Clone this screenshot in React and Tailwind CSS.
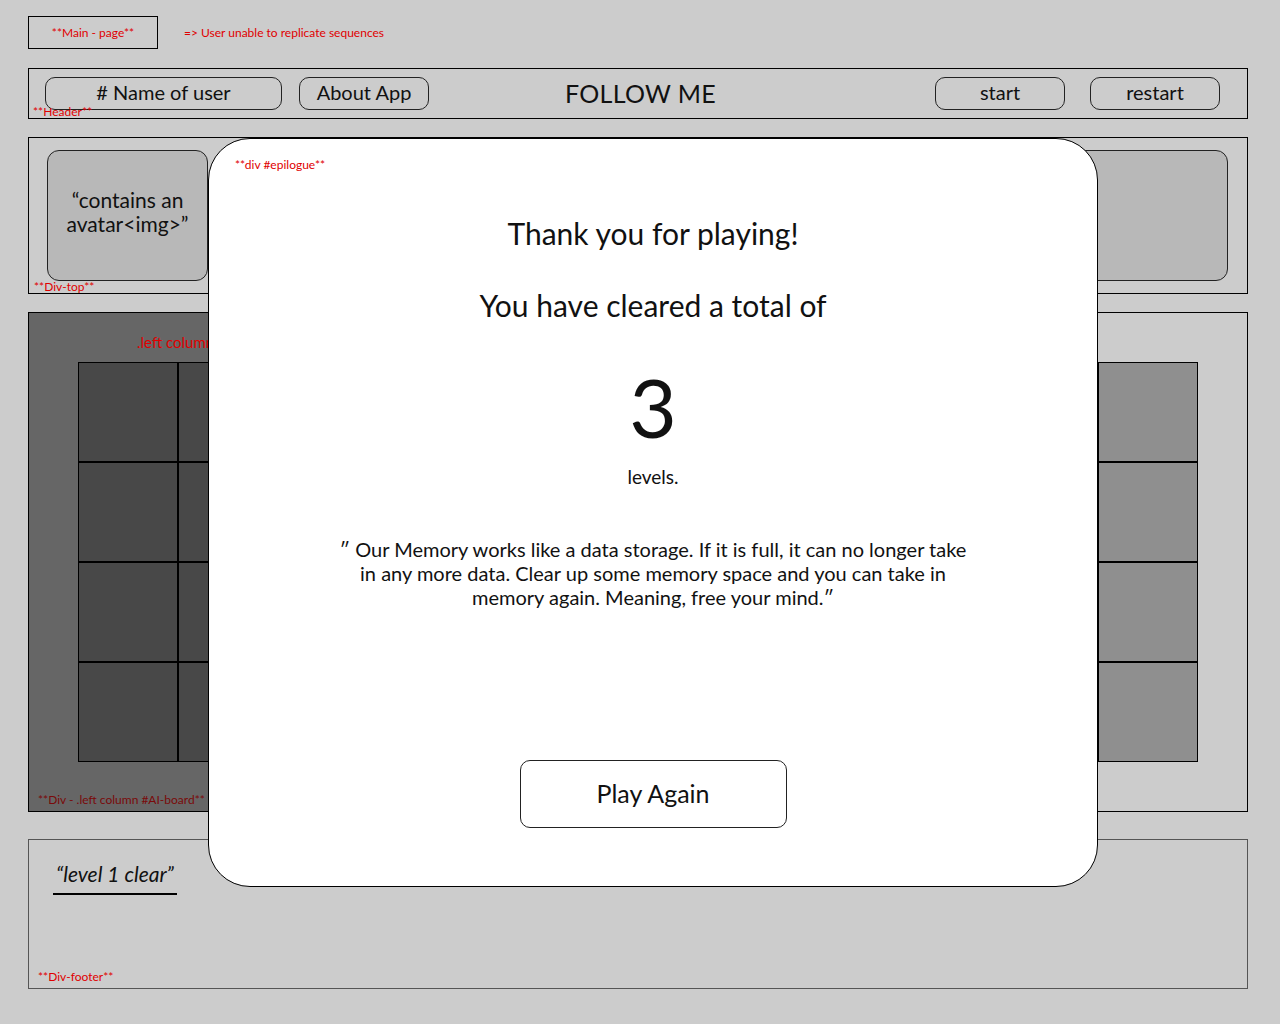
import React from "react";

const font = { fontFamily: "Lato, 'Open Sans', sans-serif" };

const Cell = ({ tone }) => (
  <div className={`w-[100px] h-[100px] border border-black ${tone}`} />
);

const Board = ({ tone }) => (
  <div className="grid grid-cols-4 w-[400px] h-[400px]">
    {Array.from({ length: 16 }).map((_, i) => (
      <Cell key={i} tone={tone} />
    ))}
  </div>
);

const PillButton = ({ children, width }) => (
  <button
    className={`h-[33px] ${width} rounded-[10px] border border-[#222] text-[20px] leading-none pb-[3px] text-[#111]`}
  >
    {children}
  </button>
);

export default function App() {
  return (
    <div className="relative min-h-screen w-full bg-[#cccccc]" style={font}>
      <div className="ml-[28px] w-[1220px] pt-[16px] pb-[36px]">
        {/* main page label */}
        <div className="flex items-center">
          <div className="w-[130px] h-[33px] border border-black flex items-center justify-center text-[12px] text-[#e00000]">
            **Main - page**
          </div>
          <div className="ml-[26px] text-[12px] text-[#e00000]">
            =&gt; User unable to replicate sequences
          </div>
        </div>

        {/* header */}
        <div className="relative mt-[19px] h-[51px] border border-black flex items-center pl-[16px] pr-[27px]">
          <PillButton width="w-[237px]"># Name of user</PillButton>
          <div className="ml-[17px]">
            <PillButton width="w-[130px]">About App</PillButton>
          </div>
          <div className="ml-[136px] text-[25px] text-[#111] tracking-[0.3px]">FOLLOW ME</div>
          <div className="ml-auto flex gap-[25px]">
            <PillButton width="w-[130px]">start</PillButton>
            <PillButton width="w-[130px]">restart</PillButton>
          </div>
          <span className="absolute left-[4px] bottom-[-3px] text-[12px] text-[#e00000]">**Header**</span>
        </div>

        {/* div top */}
        <div className="relative mt-[18px] h-[157px] border border-black flex pt-[12px] pl-[18px] pr-[19px]">
          <div className="w-[161px] h-[131px] rounded-[12px] border border-[#222] bg-[#b8b8b8] flex items-center justify-center text-center text-[21px] leading-[24px] pb-[8px] text-[#111]">
            “contains an
            <br />
            avatar&lt;img&gt;”
          </div>
          <div className="ml-auto w-[400px] h-[131px] rounded-[12px] border border-[#222] bg-[#b8b8b8]" />
          <span className="absolute left-[5px] bottom-[-3px] text-[12px] text-[#e00000]">**Div-top**</span>
        </div>

        {/* columns */}
        <div className="mt-[18px] flex items-start h-[500px]">
          <div className="relative w-[610px] h-[500px] border border-black bg-[#666666] pt-[49px] pl-[49px]">
            <div className="absolute left-[108px] top-[18px] text-[15px] text-[#e00000]">.left column</div>
            <Board tone="bg-[#484848]" />
            <span className="absolute left-[9px] bottom-[2px] text-[12px] text-[#7a0a0a]">
              **Div - .left column #AI-board**
            </span>
          </div>
          <div className="w-[610px] h-[500px] border border-l-0 border-black bg-[#cccccc] pt-[49px] flex items-start justify-end pr-[49px]">
            <Board tone="bg-[#8f8f8f]" />
          </div>
        </div>

        {/* footer */}
        <div className="relative mt-[27px] h-[150px] border border-[#555] pt-[18px] pl-[24px]">
          <div className="inline-block border-b-2 border-black pb-[3px] px-[3px] text-[21px] italic text-[#111]">
            “level 1 clear”
          </div>
          <span className="absolute left-[9px] bottom-[2px] text-[12px] text-[#e00000]">**Div-footer**</span>
        </div>
      </div>

      {/* epilogue overlay */}
      <div className="absolute left-[208px] top-[138px] w-[890px] h-[749px] rounded-[42px] border border-black bg-white flex flex-col items-center">
        <span className="absolute left-[26px] top-[17px] text-[12px] text-[#e00000]">**div #epilogue**</span>
        <div className="mt-[74px] text-[30px] leading-[40px] text-[#111]">Thank you for playing!</div>
        <div className="mt-[32px] text-[30px] leading-[40px] text-[#111]">You have cleared a total of</div>
        <div className="mt-[36px] text-[82px] leading-[90px] text-[#111]">3</div>
        <div className="mt-[14px] text-[19px] leading-[24px] text-[#111]">levels.</div>
        <div className="mt-[48px] text-center text-[20px] leading-[24px] text-[#111]">
          ″ Our Memory works like a data storage. If it is full, it can no longer take
          <br />
          in any more data. Clear up some memory space and you can take in
          <br />
          memory again. Meaning, free your mind.″
        </div>
        <button className="mt-[151px] w-[267px] h-[68px] rounded-[10px] border border-[#222] text-[25px] text-[#111]">
          Play Again
        </button>
      </div>
    </div>
  );
}
